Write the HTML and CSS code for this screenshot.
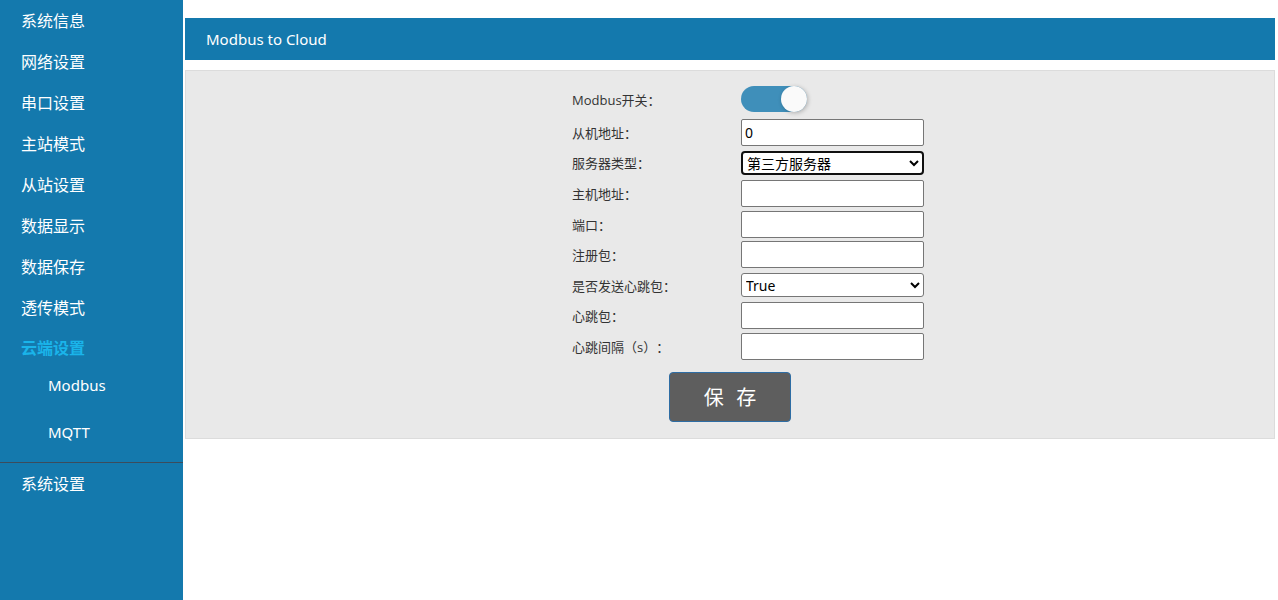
FILE: index.html
```html
<!DOCTYPE html>
<html lang="zh-CN">
<head>
<meta charset="utf-8">
<title>Modbus to Cloud</title>
<link rel="stylesheet" href="styles.css">
</head>
<body>
<div class="layout">
  <nav class="sidebar">
    <div class="nav-item">系统信息</div>
    <div class="nav-item">网络设置</div>
    <div class="nav-item">串口设置</div>
    <div class="nav-item">主站模式</div>
    <div class="nav-item">从站设置</div>
    <div class="nav-item">数据显示</div>
    <div class="nav-item">数据保存</div>
    <div class="nav-item">透传模式</div>
    <div class="nav-item active">云端设置</div>
    <div class="sub-list">
      <div class="sub-item">Modbus</div>
      <div class="sub-item">MQTT</div>
    </div>
    <div class="nav-item divided">系统设置</div>
  </nav>
  <main class="main">
    <div class="title-bar">Modbus to Cloud</div>
    <div class="panel">
      <div class="form">
        <div class="row row-toggle">
          <label class="lbl">Modbus开关：</label>
          <div class="toggle"><span class="knob"></span></div>
        </div>
        <div class="row">
          <label class="lbl">从机地址：</label>
          <input class="field" type="text" value="0">
        </div>
        <div class="row">
          <label class="lbl">服务器类型：</label>
          <select class="sel focused"><option>第三方服务器</option></select>
        </div>
        <div class="row">
          <label class="lbl">主机地址：</label>
          <input class="field" type="text">
        </div>
        <div class="row">
          <label class="lbl">端口：</label>
          <input class="field" type="text">
        </div>
        <div class="row">
          <label class="lbl">注册包：</label>
          <input class="field" type="text">
        </div>
        <div class="row">
          <label class="lbl">是否发送心跳包：</label>
          <select class="sel"><option>True</option></select>
        </div>
        <div class="row">
          <label class="lbl">心跳包：</label>
          <input class="field" type="text">
        </div>
        <div class="row">
          <label class="lbl">心跳间隔（s）：</label>
          <input class="field" type="text">
        </div>
      </div>
      <div class="actions">
        <button class="save" type="button">保 存</button>
      </div>
    </div>
  </main>
</div>
</body>
</html>
```

FILE: styles.css
```css
* { box-sizing: border-box; }
html, body { margin: 0; padding: 0; background: #fff; }
body {
  font-family: "Noto Sans", "Noto Sans CJK SC", sans-serif;
  color: #333;
  text-spacing-trim: space-all;
}
.layout {
  display: flex;
  align-items: flex-start;
  min-height: 600px;
}
.sidebar {
  width: 183px;
  flex: 0 0 183px;
  min-height: 600px;
  background: #1479ad;
  display: flex;
  flex-direction: column;
}
.nav-item {
  height: 41px;
  line-height: 41px;
  padding-left: 21px;
  color: #fff;
  font-size: 16px;
  font-family: "Noto Sans CJK SC", sans-serif;
}
.nav-item.active {
  color: #1ab4ea;
  font-weight: bold;
  height: 34px;
  line-height: 38px;
}
.sub-list {
  margin-bottom: 6px;
}
.sub-item {
  height: 47px;
  line-height: 47px;
  padding-left: 48px;
  color: #fff;
  font-size: 15px;
}
.nav-item.divided {
  border-top: 1px solid #3c4c5c;
}
.main {
  flex: 1;
  margin: 18px 3px 0 2px;
}
.title-bar {
  height: 42px;
  line-height: 42px;
  background: #1479ad;
  color: #fff;
  font-size: 15px;
  padding-left: 21px;
}
.panel {
  margin-top: 10px;
  background: #e9e9e9;
  border: 1px solid #dcdcdc;
  padding: 10px 0 16px;
}
.form {
  margin-left: 386px;
  width: 352px;
}
.row {
  display: flex;
  align-items: center;
  height: 30.6px;
}
.row-toggle {
  height: 36px;
}
.lbl {
  width: 169px;
  flex: 0 0 169px;
  font-size: 13px;
  color: #333;
  font-family: "Open Sans", "Noto Sans CJK SC", sans-serif;
  text-spacing-trim: space-all;
}
.field {
  width: 183px;
  height: 27px;
  border: 1px solid #767676;
  border-radius: 2px;
  background: #fff;
  font-size: 14px;
  padding: 0 3px;
  font-family: "Noto Sans", "Noto Sans CJK SC", sans-serif;
  color: #000;
  margin: 0;
}
.sel {
  width: 183px;
  height: 24px;
  border: 1px solid #767676;
  border-radius: 3px;
  background: #fff;
  font-size: 14px;
  padding: 0;
  color: #000;
  font-family: "Noto Sans", "Noto Sans CJK SC", sans-serif;
  margin: 0;
}
.sel.focused {
  border: 2px solid #101010;
  border-radius: 4px;
}
.toggle {
  width: 66px;
  height: 26px;
  border-radius: 13px;
  background: #3f8fba;
  display: flex;
  justify-content: flex-end;
  align-items: center;
}
.knob {
  width: 26px;
  height: 26px;
  border-radius: 50%;
  background: #fafafa;
  box-shadow: 1px 1px 4px rgba(0,0,0,0.25);
}
.actions {
  display: flex;
  justify-content: center;
  margin-top: 10px;
}
.save {
  width: 122px;
  height: 50px;
  background: #5e5e5e;
  border: 1px solid #2e6da4;
  border-radius: 4px;
  color: #fff;
  font-size: 20px;
  letter-spacing: 4px;
  padding: 0 0 0 4px;
  font-family: "Noto Sans CJK SC", sans-serif;
}
```
